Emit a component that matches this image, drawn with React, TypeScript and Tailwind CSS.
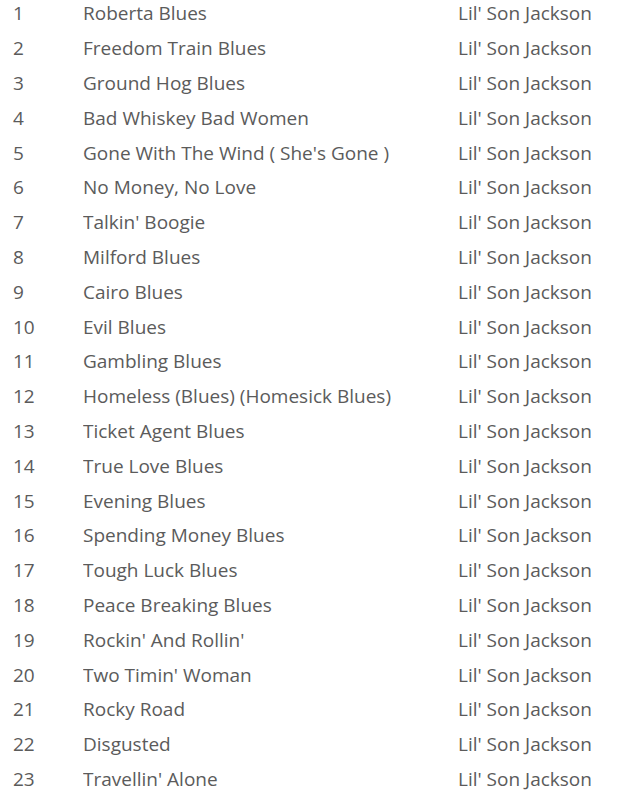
import React from "react";

const tracks = [
  "Roberta Blues",
  "Freedom Train Blues",
  "Ground Hog Blues",
  "Bad Whiskey Bad Women",
  "Gone With The Wind ( She's Gone )",
  "No Money, No Love",
  "Talkin' Boogie",
  "Milford Blues",
  "Cairo Blues",
  "Evil Blues",
  "Gambling Blues",
  "Homeless (Blues) (Homesick Blues)",
  "Ticket Agent Blues",
  "True Love Blues",
  "Evening Blues",
  "Spending Money Blues",
  "Tough Luck Blues",
  "Peace Breaking Blues",
  "Rockin' And Rollin'",
  "Two Timin' Woman",
  "Rocky Road",
  "Disgusted",
  "Travellin' Alone",
];

export default function App() {
  return (
    <div className="w-[618px] h-[792px] bg-white overflow-hidden font-['Open_Sans',sans-serif] text-[19px] text-[#5b5b5b]">
      <ul className="flex flex-col -mt-[4px]">
        {tracks.map((title, i) => (
          <li key={title} className="flex items-center h-[34.8px] leading-[26px]">
            <span className="w-[83px] pl-[13px]">{i + 1}</span>
            <span className="w-[375px] truncate">{title}</span>
            <span>Lil' Son Jackson</span>
          </li>
        ))}
      </ul>
    </div>
  );
}
